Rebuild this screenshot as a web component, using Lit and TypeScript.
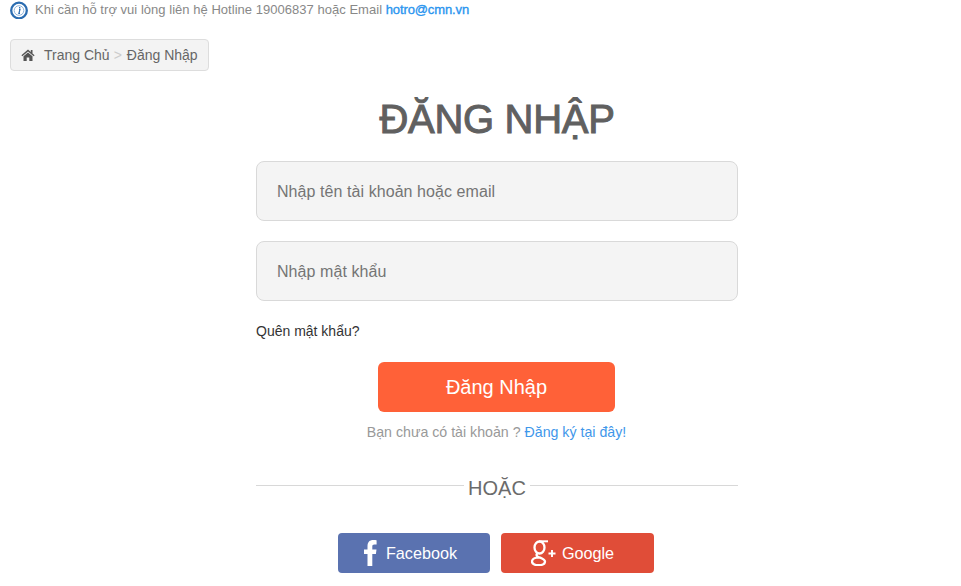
import { LitElement, html, css } from "lit";
import { customElement } from "lit/decorators.js";

@customElement("app-root")
export class AppRoot extends LitElement {
  static styles = css`
    :host { display: block; width: 961px; height: 586px; overflow: hidden; background: #fff; font-family: "Liberation Sans", Arial, sans-serif; color: #666; }
    a { text-decoration: none; }
    .top { display: flex; align-items: center; gap: 7px; padding: 0 0 0 10px; height: 19px; font-size: 13px; letter-spacing: 0.03px; color: #888; }
    .top a { color: #2a95ef; -webkit-text-stroke: 0.35px #2a95ef; letter-spacing: -0.12px; }
    .top svg { display: block; flex: none; }
    .crumb { display: inline-flex; align-items: center; box-sizing: border-box; height: 32px; margin: 20px 0 0 10px; padding: 0 10px 0 10px; background: #f3f3f3; border: 1px solid #ddd; border-radius: 4px; font-size: 14px; color: #666; }
    .crumb svg { display: block; margin-right: 9px; }
    .crumb .sep { color: #ccc; margin: 0 5px 0 4px; }
    .form { width: 482px; margin: 0 0 0 256px; }
    h1 { margin: 24px 0 0; font-size: 40px; line-height: 48px; letter-spacing: -0.3px; font-weight: normal; color: #606060; text-align: center; -webkit-text-stroke: 1px #606060; }
    .field { box-sizing: border-box; height: 60px; margin-top: 20px; display: flex; align-items: center; padding: 2px 0 0 20px; background: #f4f4f4; border: 1px solid #d9d9d9; border-radius: 8px; font-size: 16px; letter-spacing: 0.07px; color: #757575; }
    .field.first { margin-top: 18px; }
    .forgot { display: block; margin-top: 22px; font-size: 14px; line-height: 16px; color: #333; }
    .submit { display: flex; align-items: center; justify-content: center; width: 237px; height: 50px; margin: 23px 0 0 122px; background: #ff6138; border-radius: 6px; color: #fff; font-size: 20px; }
    .reg { margin-top: 12px; text-align: center; font-size: 14.2px; line-height: 16px; color: #999; padding-right: 1px; }
    .reg a { color: #3f97ea; }
    .or { display: flex; align-items: center; gap: 4px; margin-top: 36px; font-size: 20px; line-height: 24px; color: #6b6b6b; }
    .or i { flex: 1; height: 1px; background: #d8d8d8; margin-bottom: 6px; }
    .social { display: flex; gap: 11px; margin: 33px 0 0 82px; }
    .btn { display: flex; align-items: center; justify-content: center; box-sizing: border-box; height: 40px; border-radius: 4px; color: #fff; font-size: 16.2px; }
    .fb { width: 152px; background: #5a72b0; gap: 9px; padding-right: 7px; }
    .gg { width: 153px; background: #e04d38; gap: 6px; padding-right: 10px; }
    .btn svg { display: block; flex: none; }
  `;

  render() {
    return html`
      <div class="top">
        <svg width="18" height="18" viewBox="0 0 18 18">
          <circle cx="9" cy="9.500" r="7.800" fill="none" stroke="#2b6cb0" stroke-width="2.300" />
          <circle cx="9" cy="9.500" r="4.800" fill="none" stroke="#8fb4dc" stroke-width="1" />
          <path d="M9.700 6v1.200M9 8.300h1l-1.100 4h1.100" fill="none" stroke="#2b6cb0" stroke-width="1.200" />
        </svg>
        <span>Khi cần hỗ trợ vui lòng liên hệ Hotline 19006837 hoặc Email <a href="#">hotro@cmn.vn</a></span>
      </div>
      <div class="crumb">
        <svg width="14" height="12" viewBox="0 0 14 12"><path d="M7 0.500 0.400 6.200l.9 1L7 2.400l5.700 4.800.9-1L11.500 4.400V1H9.800v1.900zM2.500 7.300V12h3.200V8.500h2.600V12h3.200V7.300L7 3.600z" fill="#555" /></svg>
        <span>Trang Chủ</span><span class="sep">&gt;</span><span>Đăng Nhập</span>
      </div>
      <div class="form">
        <h1>ĐĂNG NHẬP</h1>
        <div class="field first">Nhập tên tài khoản hoặc email</div>
        <div class="field">Nhập mật khẩu</div>
        <a class="forgot" href="#">Quên mật khẩu?</a>
        <div class="submit">Đăng Nhập</div>
        <div class="reg">Bạn chưa có tài khoản ? <a href="#">Đăng ký tại đây!</a></div>
        <div class="or"><i></i><span>HOẶC</span><i></i></div>
        <div class="social">
          <div class="btn fb">
            <svg width="13" height="26" viewBox="0 0 13 26"><path d="M3.500 26V14H0V9.500h3.500V6.200C3.500 2 5.600 0 9.300 0c1.500 0 2.900.1 3.300.2v4.300h-2.200C8.700 4.500 8.300 5.400 8.300 6.700v2.800h4.200l-.6 4.500H8.300v12z" fill="#fff" /></svg>
            <span>Facebook</span>
          </div>
          <div class="btn gg">
            <svg width="25" height="26" viewBox="0 0 25 26" fill="none" stroke="#fff">
              <ellipse cx="8.500" cy="7.500" rx="5" ry="6" stroke-width="2.300" />
              <path d="M17 1.300H8" stroke-width="2" />
              <path d="M6.500 13.500c-1.500 1-1.300 2.300.5 3.200 3.200 1.500 7 2.400 7 4.800 0 2.600-3.300 3.700-6.600 3.700-3.500 0-6.400-1.400-6.400-3.600 0-2.500 3.300-4.200 7.200-4.200" stroke-width="2.300" />
              <path d="M17.500 13.500h7M21 10v7" stroke-width="1.900" />
            </svg>
            <span>Google</span>
          </div>
        </div>
      </div>
    `;
  }
}
